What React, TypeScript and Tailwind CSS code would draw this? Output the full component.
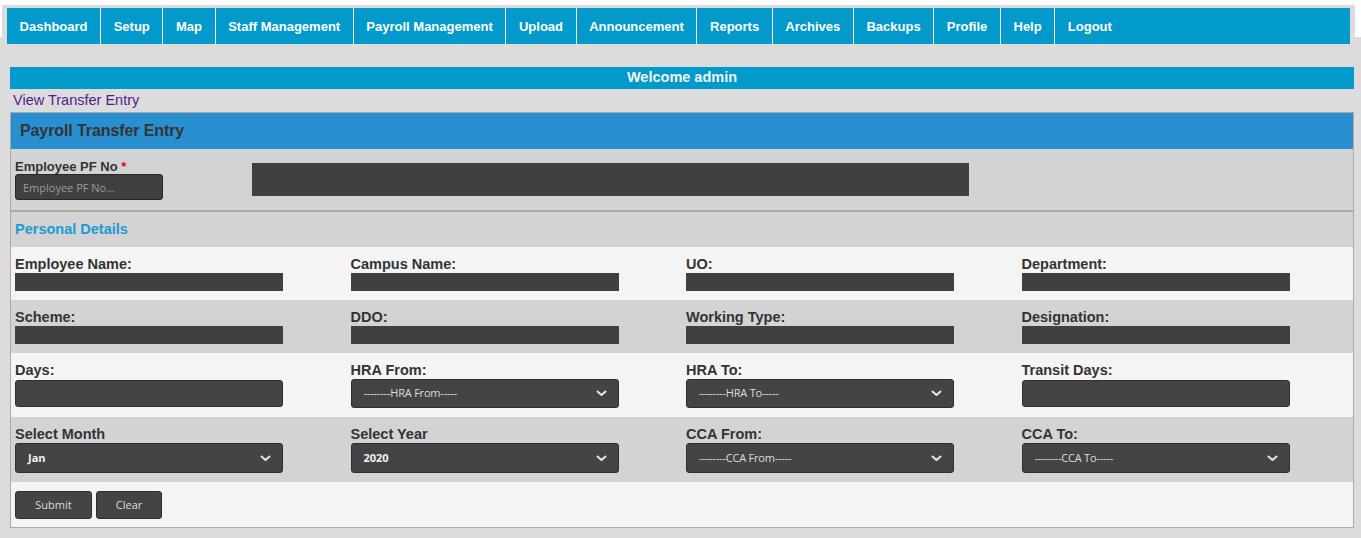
import React from "react";

const navItems = [
  "Dashboard",
  "Setup",
  "Map",
  "Staff Management",
  "Payroll Management",
  "Upload",
  "Announcement",
  "Reports",
  "Archives",
  "Backups",
  "Profile",
  "Help",
  "Logout",
];

const Chevron = () => (
  <svg width="11" height="7" viewBox="0 0 11 7" className="shrink-0">
    <polyline points="1.5,1.5 5.5,5 9.5,1.5" fill="none" stroke="#e8e8e8" strokeWidth="2" strokeLinecap="round" strokeLinejoin="round" />
  </svg>
);

const Label = ({ children }: { children: React.ReactNode }) => (
  <div className="h-[16px] text-[14.5px] leading-[16px] font-bold text-[#333] whitespace-nowrap">{children}</div>
);

const Bar = () => <div className="mt-[1px] h-[18px] w-[268px] bg-[#404040]" />;

const Select = ({ text, bold, h }: { text: string; bold?: boolean; h: string }) => (
  <div
    className={`mt-[1px] ${h} w-[268px] bg-[#444444] border border-[#2e2e2e] rounded-[3px] flex items-center justify-between pl-[12px] pr-[11px] font-['Open_Sans',sans-serif] text-[11px] ${
      bold ? "font-bold text-[#f2f2f2]" : "text-[#dddddd] tracking-[-0.2px]"
    }`}
  >
    <span className="whitespace-nowrap">{text}</span>
    <Chevron />
  </div>
);

const TextInput = () => (
  <div className="mt-[2px] h-[27px] w-[268px] bg-[#444444] border border-[#2e2e2e] rounded-[3px]" />
);

const Cell = ({ children }: { children: React.ReactNode }) => <div className="pl-[4px]">{children}</div>;

export default function App() {
  return (
    <div className="min-h-screen bg-[#dcdcdc] font-['Liberation_Sans',Arial,sans-serif]">
      {/* header */}
      <div className="h-[37px] bg-white pt-[5px] pl-[2px] pr-[6px]">
        <div className="h-[32px] bg-[#dcdcdc] pt-[3px] pl-[5px] pr-[5px]">
          <nav className="h-[36px] bg-[#0299cb] flex">
            {navItems.map((n, i) => (
              <div
                key={n}
                className={`h-full flex items-center pt-[1px] px-[12.6px] text-[13px] font-bold text-white whitespace-nowrap ${
                  i < navItems.length - 1 ? "border-r border-white" : ""
                }`}
              >
                {n}
              </div>
            ))}
          </nav>
        </div>
      </div>

      <div className="ml-[10px] mr-[7px]">
        <div className="mt-[30px] h-[22px] bg-[#0299cb] flex items-center justify-center text-[14.5px] font-bold text-[#f4f4f4]">
          Welcome admin
        </div>
        <div className="h-[23px] leading-[23px] pl-[3px] text-[14.5px] text-[#551a8b]">View Transfer Entry</div>

        <div className="border border-[#aaaaaa]">
          <div className="h-[36px] bg-[#2a8fd0] flex items-center pl-[9px] text-[16px] font-bold text-[#333] tracking-[-0.1px]">
            Payroll Transfer Entry
          </div>

          <div className="h-[61px] bg-[#d3d3d3] flex items-start border-b-2 border-[#aaaaaa] box-content">
            <div className="pl-[4px] pt-[10px] w-[241px]">
              <div className="h-[15px] leading-[15px] text-[13px] font-bold text-[#333] whitespace-nowrap">
                Employee PF No <span className="text-[#e00]">*</span>
              </div>
              <input
                placeholder="Employee PF No..."
                className="block h-[26px] w-[148px] bg-[#404040] border border-[#262626] rounded-[3px] px-[7px] font-['Open_Sans',sans-serif] text-[11px] text-white placeholder:text-[#9a9a9a] outline-none"
              />
            </div>
            <div className="mt-[14px] h-[33px] w-[717px] bg-[#404040]" />
          </div>

          <div className="h-[35px] bg-[#d3d3d3] flex items-center pl-[4px] text-[14.5px] font-bold text-[#1b9bd5]">
            Personal Details
          </div>

          <div className="grid grid-cols-4 bg-[#f4f4f4] pt-[9px] pb-[9px]">
            <Cell><Label>Employee Name:</Label><Bar /></Cell>
            <Cell><Label>Campus Name:</Label><Bar /></Cell>
            <Cell><Label>UO:</Label><Bar /></Cell>
            <Cell><Label>Department:</Label><Bar /></Cell>
          </div>
          <div className="grid grid-cols-4 bg-[#d3d3d3] pt-[9px] pb-[9px]">
            <Cell><Label>Scheme:</Label><Bar /></Cell>
            <Cell><Label>DDO:</Label><Bar /></Cell>
            <Cell><Label>Working Type:</Label><Bar /></Cell>
            <Cell><Label>Designation:</Label><Bar /></Cell>
          </div>
          <div className="grid grid-cols-4 items-start bg-[#f4f4f4] pt-[9px] pb-[9px]">
            <Cell><Label>Days:</Label><TextInput /></Cell>
            <Cell><Label>HRA From:</Label><Select h="h-[29px]" text="--------HRA From-----" /></Cell>
            <Cell><Label>HRA To:</Label><Select h="h-[29px]" text="--------HRA To-----" /></Cell>
            <Cell><Label>Transit Days:</Label><TextInput /></Cell>
          </div>
          <div className="grid grid-cols-4 bg-[#d3d3d3] pt-[9px] pb-[9px]">
            <Cell><Label>Select Month</Label><Select h="h-[30px]" text="Jan" bold /></Cell>
            <Cell><Label>Select Year</Label><Select h="h-[30px]" text="2020" bold /></Cell>
            <Cell><Label>CCA From:</Label><Select h="h-[30px]" text="--------CCA From-----" /></Cell>
            <Cell><Label>CCA To:</Label><Select h="h-[30px]" text="--------CCA To-----" /></Cell>
          </div>
          <div className="bg-[#f4f4f4] pt-[9px] pb-[8px] pl-[4px] flex gap-[4px]">
            <button className="h-[28px] w-[77px] bg-[#444444] border border-[#2e2e2e] rounded-[3px] font-['Open_Sans',sans-serif] text-[11px] text-[#dddddd]">
              Submit
            </button>
            <button className="h-[28px] w-[66px] bg-[#444444] border border-[#2e2e2e] rounded-[3px] font-['Open_Sans',sans-serif] text-[11px] text-[#dddddd]">
              Clear
            </button>
          </div>
        </div>
      </div>
    </div>
  );
}
